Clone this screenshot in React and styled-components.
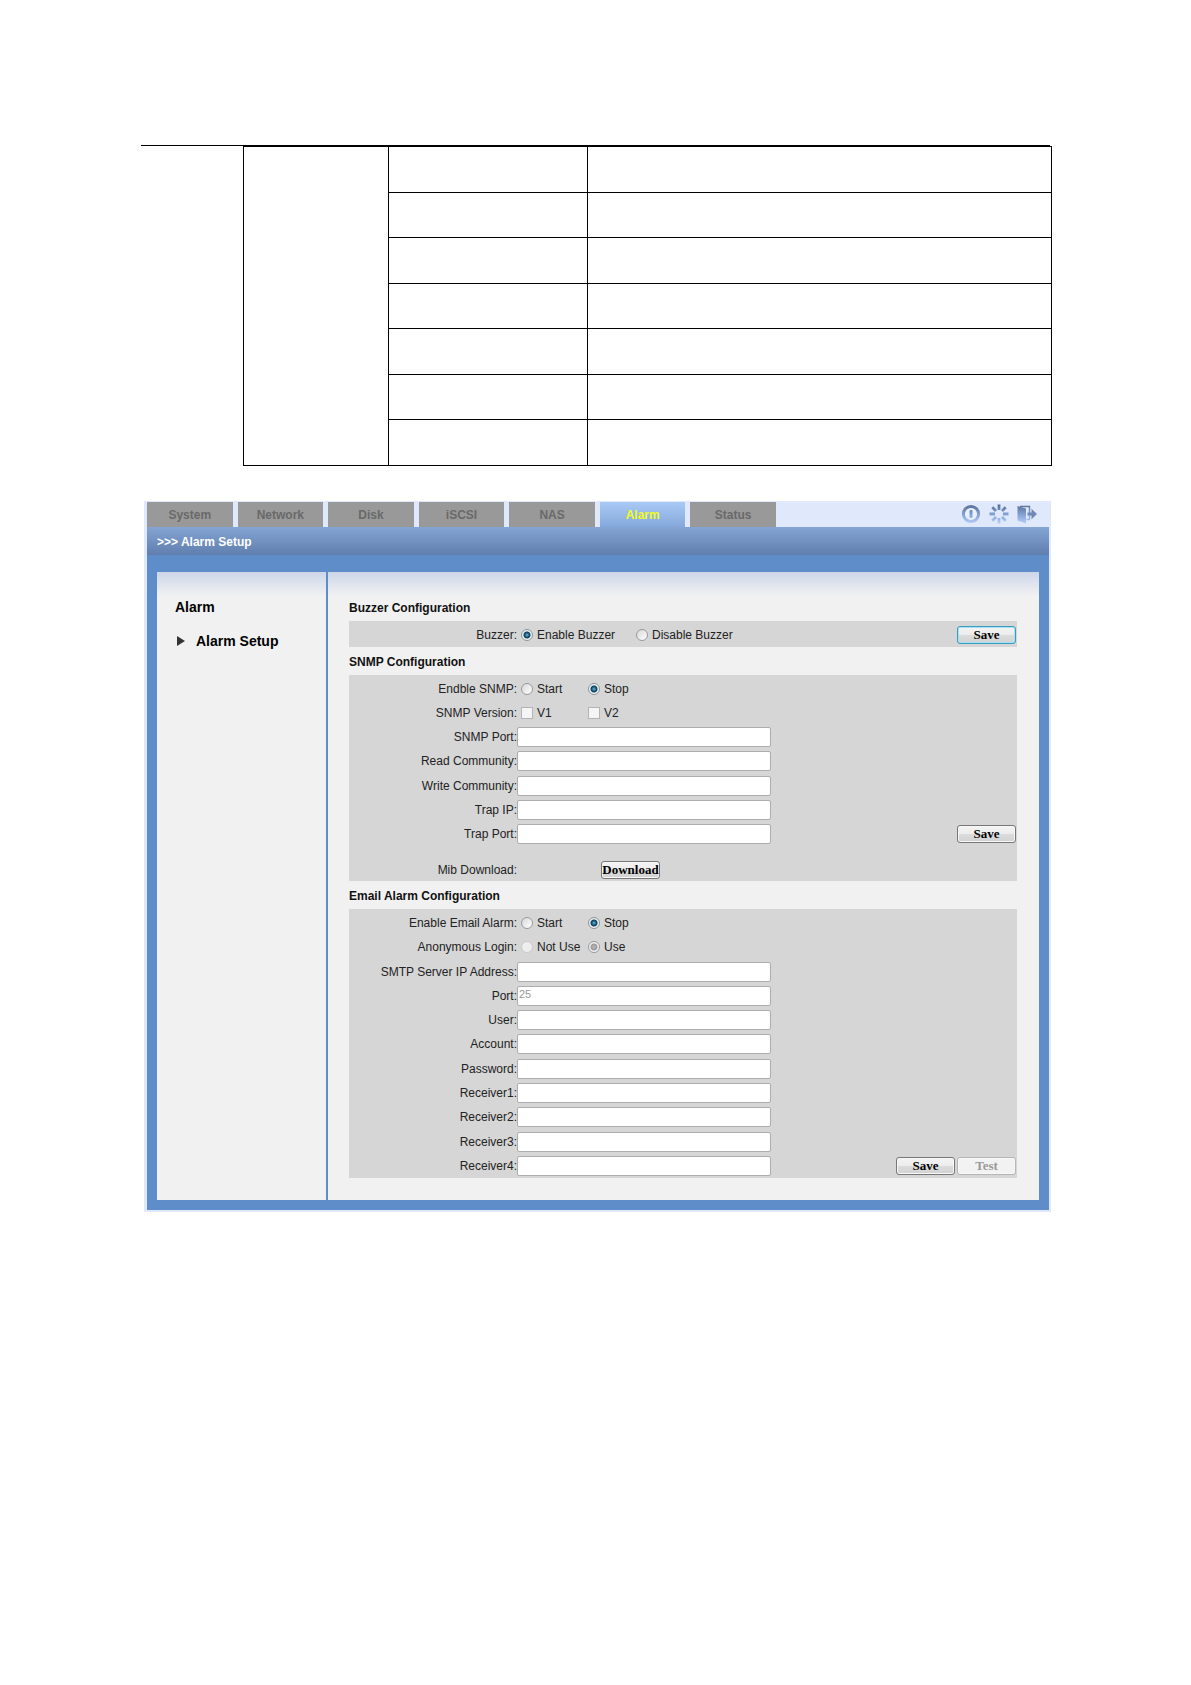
import { useState } from 'react'
import styled, { createGlobalStyle } from 'styled-components'

const tabs = ['System', 'Network', 'Disk', 'iSCSI', 'NAS', 'Alarm', 'Status']

const snmpFields = [
    { id: 'snmp-port', label: 'SNMP Port' },
    { id: 'read-community', label: 'Read Community' },
    { id: 'write-community', label: 'Write Community' },
    { id: 'trap-ip', label: 'Trap IP' },
]

const emailFields = [
    { id: 'smtp-server', label: 'SMTP Server IP Address' },
    { id: 'smtp-port', label: 'Port', value: '25', disabled: true },
    { id: 'user', label: 'User' },
    { id: 'account', label: 'Account' },
    { id: 'password', label: 'Password', type: 'password' },
    { id: 'receiver1', label: 'Receiver1' },
    { id: 'receiver2', label: 'Receiver2' },
    { id: 'receiver3', label: 'Receiver3' },
]

const TextRow = ({ id, label, value = '', type = 'text', disabled, children }) => (
    <Row>
        <Label htmlFor={id}>{label}:</Label>
        <TextBox id={id} type={type} defaultValue={value} disabled={disabled} />
        {children && <Actions>{children}</Actions>}
    </Row>
)

const RadioRow = ({ name, label, options, initial, disabled, wide, children }) => {
    const [selected, setSelected] = useState(initial)

    return (
        <Row role="radiogroup" aria-labelledby={`${name}-label`}>
            <Caption id={`${name}-label`}>{label}:</Caption>
            <Options>
                {options.map((option) => (
                    <Option key={option} $wide={wide}>
                        <Radio
                            type="radio"
                            name={name}
                            checked={selected === option}
                            disabled={disabled}
                            onChange={() => setSelected(option)}
                        />
                        {option}
                    </Option>
                ))}
            </Options>
            {children && <Actions>{children}</Actions>}
        </Row>
    )
}

const IconGradient = ({ id }) => (
    <defs>
        <linearGradient id={id} gradientUnits="userSpaceOnUse" x1="0" y1="1" x2="0" y2="19">
            <stop offset="0" stopColor="#5a7098" />
            <stop offset="0.5" stopColor="#809fd2" />
            <stop offset="1" stopColor="#b3caf8" />
        </linearGradient>
    </defs>
)

const PowerIcon = () => (
    <svg width="20" height="20" viewBox="0 0 20 20">
        <IconGradient id="power" />
        <circle cx="10" cy="10" r="7.6" fill="#e9f0fd" stroke="url(#power)" strokeWidth="3" />
        <rect x="8.5" y="6" width="3" height="8" rx="1" fill="url(#power)" />
    </svg>
)

const RestartIcon = () => (
    <svg width="20" height="20" viewBox="0 0 20 20">
        <IconGradient id="restart" />
        <path
            d="M10.01 0.5L10 6M10 14L10.01 19.5M0.5 10L6 10.01M14 10L19.5 10.01M3.3 3.3L7 7M13 13L16.7 16.7M3.3 16.7L7 13M13 7L16.7 3.3"
            fill="none"
            stroke="url(#restart)"
            strokeWidth="2.8"
        />
    </svg>
)

const ExitIcon = () => (
    <svg width="20" height="20" viewBox="0 0 20 20">
        <IconGradient id="exit" />
        <path d="M0.5 2L9 4.5V19.5L0.5 16.5Z" fill="url(#exit)" />
        <path d="M3 2.5H12.5V15.5H9.5" fill="none" stroke="url(#exit)" strokeWidth="1.4" />
        <path d="M10.5 8.4H14.5V4.8L20 10L14.5 15.2V11.6H10.5Z" fill="#7187b5" />
    </svg>
)

const App = () => (
    <>
        <GlobalStyle />
        <Page>
            <Rule />
            <Table>
                <colgroup>
                    <col width="145" />
                    <col width="199" />
                    <col />
                </colgroup>
                <tbody>
                    {Array.from({ length: 7 }, (_, i) => (
                        <tr key={i}>
                            {i === 0 && <td rowSpan={7} />}
                            <td />
                            <td />
                        </tr>
                    ))}
                </tbody>
            </Table>

            <Console>
                <TopBar>
                    <Tabs>
                        {tabs.map((tab) => (
                            <Tab key={tab} href={`#${tab.toLowerCase()}`} $active={tab === 'Alarm'}>
                                {tab}
                            </Tab>
                        ))}
                    </Tabs>
                    <Tools>
                        <ToolButton aria-label="Shut down"><PowerIcon /></ToolButton>
                        <ToolButton aria-label="Restart"><RestartIcon /></ToolButton>
                        <ToolButton aria-label="Log out"><ExitIcon /></ToolButton>
                    </Tools>
                </TopBar>
                <TitleBar>&gt;&gt;&gt; Alarm Setup</TitleBar>

                <Body>
                    <Sidebar>
                        <SideTitle>Alarm</SideTitle>
                        <SideLink href="#alarm-setup">
                            <svg width="8" height="10" viewBox="0 0 8 10">
                                <path d="M0 0L8 5L0 10Z" fill="#333" />
                            </svg>
                            Alarm Setup
                        </SideLink>
                    </Sidebar>

                    <Main>
                        <Heading>Buzzer Configuration</Heading>
                        <Group $height={26}>
                            <RadioRow
                                name="buzzer"
                                label="Buzzer"
                                options={['Enable Buzzer', 'Disable Buzzer']}
                                initial="Enable Buzzer"
                                wide
                            >
                                <Button $focused>Save</Button>
                            </RadioRow>
                        </Group>

                        <Heading>SNMP Configuration</Heading>
                        <Group $height={171}>
                            <RadioRow name="snmp" label="Endble SNMP" options={['Start', 'Stop']} initial="Stop" />
                            <Row role="group" aria-labelledby="version-label">
                                <Caption id="version-label">SNMP Version:</Caption>
                                <Options>
                                    <Option><Checkbox type="checkbox" />V1</Option>
                                    <Option><Checkbox type="checkbox" />V2</Option>
                                </Options>
                            </Row>
                            {snmpFields.map((field) => <TextRow key={field.id} {...field} />)}
                            <TextRow id="trap-port" label="Trap Port">
                                <Button>Save</Button>
                            </TextRow>
                        </Group>
                        <DownloadRow>
                            <Caption id="mib-label">Mib Download:</Caption>
                            <Button aria-describedby="mib-label">Download</Button>
                        </DownloadRow>

                        <Heading>Email Alarm Configuration</Heading>
                        <Group $height={269}>
                            <RadioRow name="email" label="Enable Email Alarm" options={['Start', 'Stop']} initial="Stop" />
                            <RadioRow name="anonymous" label="Anonymous Login" options={['Not Use', 'Use']} initial="Use" disabled />
                            {emailFields.map((field) => <TextRow key={field.id} {...field} />)}
                            <TextRow id="receiver4" label="Receiver4">
                                <Button>Save</Button>
                                <Button disabled>Test</Button>
                            </TextRow>
                        </Group>
                    </Main>
                </Body>
            </Console>
        </Page>
    </>
)

export default App

const GlobalStyle = createGlobalStyle`
    *{
        box-sizing: border-box;
    }

    body{
        margin: 0;
        background: #fff;
        color: #222;
        font-family: "Liberation Sans", Arial, sans-serif;
        font-size: 12px;
        line-height: 16px;
    }
`;
const Page = styled.div`
    min-height: 100vh;
    padding: 145px 139px 0 141px;
`;
const Rule = styled.hr`
    height: 1px;
    margin: 0 2px 0 0;
    border: none;
    background: #000;
`;
const Table = styled.table`
    width: calc(100% - 102px);
    height: 320px;
    margin-left: 102px;
    border-collapse: collapse;
    table-layout: fixed;

    td{
        padding: 0;
        border: 1px solid #000;
    }
`;
const Console = styled.div`
    margin: 35px 1px 0 3px;
    padding: 1px 2px 2px 3px;
    background: #dfe9fb;
`;
const TopBar = styled.header`
    display: flex;
    justify-content: space-between;
    height: 25px;
`;
const Tabs = styled.nav`
    display: grid;
    grid-template-columns: repeat(7, 1fr);
    gap: 5px;
    width: 629px;
`;
const Tab = styled.a`
    display: flex;
    align-items: center;
    justify-content: center;
    background: ${({ $active }) => $active ? 'linear-gradient(#a9caf5, #84a8da)' : '#999'};
    color: ${({ $active }) => $active ? '#f2fb1e' : '#696969'};
    font-weight: 700;
    text-decoration: none;
`;
const Tools = styled.div`
    display: flex;
    align-items: center;
    gap: 8px;
    padding: 0 12px 2px 0;
`;
const ToolButton = styled.button`
    display: flex;
    padding: 0;
    border: none;
    background: none;
    cursor: pointer;
`;
const TitleBar = styled.div`
    padding: 7px 10px 5px;
    background: linear-gradient(#84a5d3, #607eae);
    color: #fff;
    font-weight: 700;
`;
const Body = styled.div`
    display: flex;
    gap: 2px;
    padding: 17px 10px 10px;
    background: #5f8dc9;
`;
const Sidebar = styled.aside`
    flex: 0 0 169px;
    padding: 27px 18px;
    background: linear-gradient(#cdd6e9, #f1f1f1 24px);
    color: #000;
    font-size: 14px;
    font-weight: 700;
`;
const SideTitle = styled.div`
    margin-bottom: 18px;
`;
const SideLink = styled.a`
    display: flex;
    align-items: center;
    gap: 11px;
    padding-left: 2px;
    color: #000;
    text-decoration: none;
`;
const Main = styled.main`
    flex: 1;
    padding: 21px 22px 22px 21px;
    background: linear-gradient(#cdd6e9, #f1f1f1 24px);
`;
const Heading = styled.h2`
    margin: 0;
    padding: 7px 0 5px;
    color: #111;
    font-size: 12px;
    line-height: 16px;
`;
const Group = styled.div`
    display: grid;
    grid-auto-rows: 1fr;
    min-height: ${({ $height }) => $height}px;
    padding-top: 2px;
    background: #d6d6d6;
`;
const Row = styled.div`
    display: flex;
    align-items: center;
`;
const Label = styled.label`
    flex: 0 0 168px;
    text-align: right;
`;
const Caption = styled(Label).attrs({ as: 'span' })``;
const DownloadRow = styled(Row)`
    min-height: 35px;
    padding-top: 12px;
    background: #d6d6d6;

    button{
        margin-left: 84px;
    }
`;
const Options = styled.div`
    display: flex;
    padding-left: 4px;
`;
const Option = styled.label`
    display: flex;
    align-items: center;
    gap: 4px;
    width: ${({ $wide }) => $wide ? '115px' : '67px'};
    white-space: nowrap;
`;
const Radio = styled.input`
    appearance: none;
    width: 12px;
    height: 12px;
    margin: 0;
    border: 1px solid #999;
    border-radius: 50%;
    background: linear-gradient(135deg, #d8d8d8, #fff);

    &:checked{
        border-color: #8b969c;
        background: radial-gradient(circle, #6fb8d4 0, #17607f 2px, #123c58 3px, #eef2f4 4px);
    }

    &:disabled{
        border-color: #c9c9c9;
        background: #eee;
    }

    &:checked:disabled{
        border-color: #999;
        background: radial-gradient(circle, #bbb 0, #999 3px, #f2f2f2 4px);
    }
`;
const Checkbox = styled.input`
    appearance: none;
    width: 12px;
    height: 12px;
    margin: 0;
    border: 1px solid #b4b4b4;
    background: #f5f5f5;
`;
const TextBox = styled.input`
    width: 254px;
    height: 20px;
    padding: 0 1px 4px;
    border: 1px solid #adadad;
    border-radius: 2px;
    background: #fff;
    color: #222;
    font-family: inherit;
    font-size: 11px;

    &:disabled{
        color: #999;
    }
`;
const Actions = styled.div`
    display: flex;
    gap: 2px;
    margin-left: auto;
    padding-right: 1px;
`;
const Button = styled.button`
    width: 59px;
    height: 18px;
    padding: 0;
    overflow: hidden;
    border: 1px solid ${({ $focused }) => $focused ? '#3a9cc0' : '#777'};
    border-radius: 3px;
    background: linear-gradient(#f4f4f4, #ececec 50%, #dcdcdc 50%, #d2d2d2);
    box-shadow: inset 0 0 0 1px ${({ $focused }) => $focused ? '#a5e2f5' : '#f8f8f8'};
    color: #000;
    font-family: "Liberation Serif", "Times New Roman", serif;
    font-size: 13px;
    font-weight: 700;
    line-height: 14px;
    cursor: pointer;

    &:disabled{
        border-color: #b5b5b5;
        background: #f2f2f2;
        color: #999;
        cursor: default;
    }
`;
